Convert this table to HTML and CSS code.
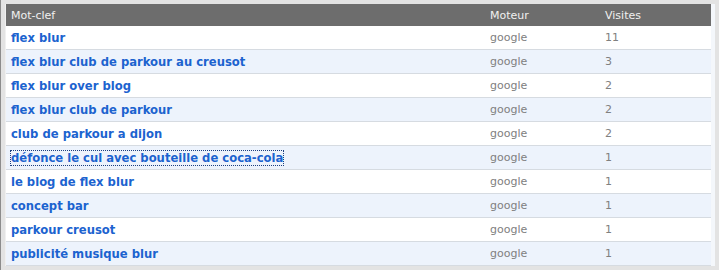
FILE: index.html
```html
<!DOCTYPE html>
<html lang="fr">
<head>
<meta charset="utf-8">
<link rel="stylesheet" href="styles.css">
</head>
<body>
<div class="frame">
  <div class="panel">
    <table class="kw">
      <thead>
        <tr><th class="c1">Mot-clef</th><th class="c2">Moteur</th><th class="c3">Visites</th></tr>
      </thead>
      <tbody>
        <tr><td><a href="#">flex blur</a></td><td>google</td><td>11</td></tr>
        <tr class="alt"><td><a href="#">flex blur club de parkour au creusot</a></td><td>google</td><td>3</td></tr>
        <tr><td><a href="#">flex blur over blog</a></td><td>google</td><td>2</td></tr>
        <tr class="alt"><td><a href="#">flex blur club de parkour</a></td><td>google</td><td>2</td></tr>
        <tr><td><a href="#">club de parkour a dijon</a></td><td>google</td><td>2</td></tr>
        <tr class="alt"><td><a href="#" class="focus">défonce le cul avec bouteille de coca-cola</a></td><td>google</td><td>1</td></tr>
        <tr><td><a href="#">le blog de flex blur</a></td><td>google</td><td>1</td></tr>
        <tr class="alt"><td><a href="#">concept bar</a></td><td>google</td><td>1</td></tr>
        <tr><td><a href="#">parkour creusot</a></td><td>google</td><td>1</td></tr>
        <tr class="alt"><td><a href="#">publicité musique blur</a></td><td>google</td><td>1</td></tr>
      </tbody>
    </table>
  </div>
</div>
</body>
</html>
```
FILE: styles.css
```css
html, body {
  margin: 0;
  padding: 0;
}
body {
  background: #e3e3e3;
  font-family: "DejaVu Sans", Verdana, sans-serif;
  font-size: 11px;
  width: 719px;
  height: 270px;
  overflow: hidden;
}
.frame {
  border-left: 1px solid #8c8c8c;
  height: 270px;
  box-sizing: border-box;
  padding: 4px 0 0 4px;
}
.panel {
  width: 710px;
  background: #f4f7fb;
  padding-right: 4px;
  box-sizing: border-box;
  border-left: 1px solid #f0f0f0;
}
.kw {
  width: 705px;
  border-collapse: collapse;
  table-layout: fixed;
}
.kw th {
  background: #6d6d6d;
  color: #f0f0f0;
  font-weight: normal;
  text-align: left;
  height: 22px;
  padding: 0 0 0 5px;
  font-size: 11px;
}
.kw th.c1 { width: 474px; }
.kw th.c2 { width: 110px; }
.kw td {
  height: 23px;
  padding: 0 0 0 5px;
  border-bottom: 1px solid #d6dbe1;
  color: #808080;
  background: #ffffff;
  white-space: nowrap;
}
.kw tr.alt td {
  background: #edf3fc;
}
.kw a {
  color: #1c63cf;
  font-weight: bold;
  font-size: 11.6px;
  text-decoration: none;
}
.kw a.focus {
  outline: 1px dotted #1c3f7f;
}
```
